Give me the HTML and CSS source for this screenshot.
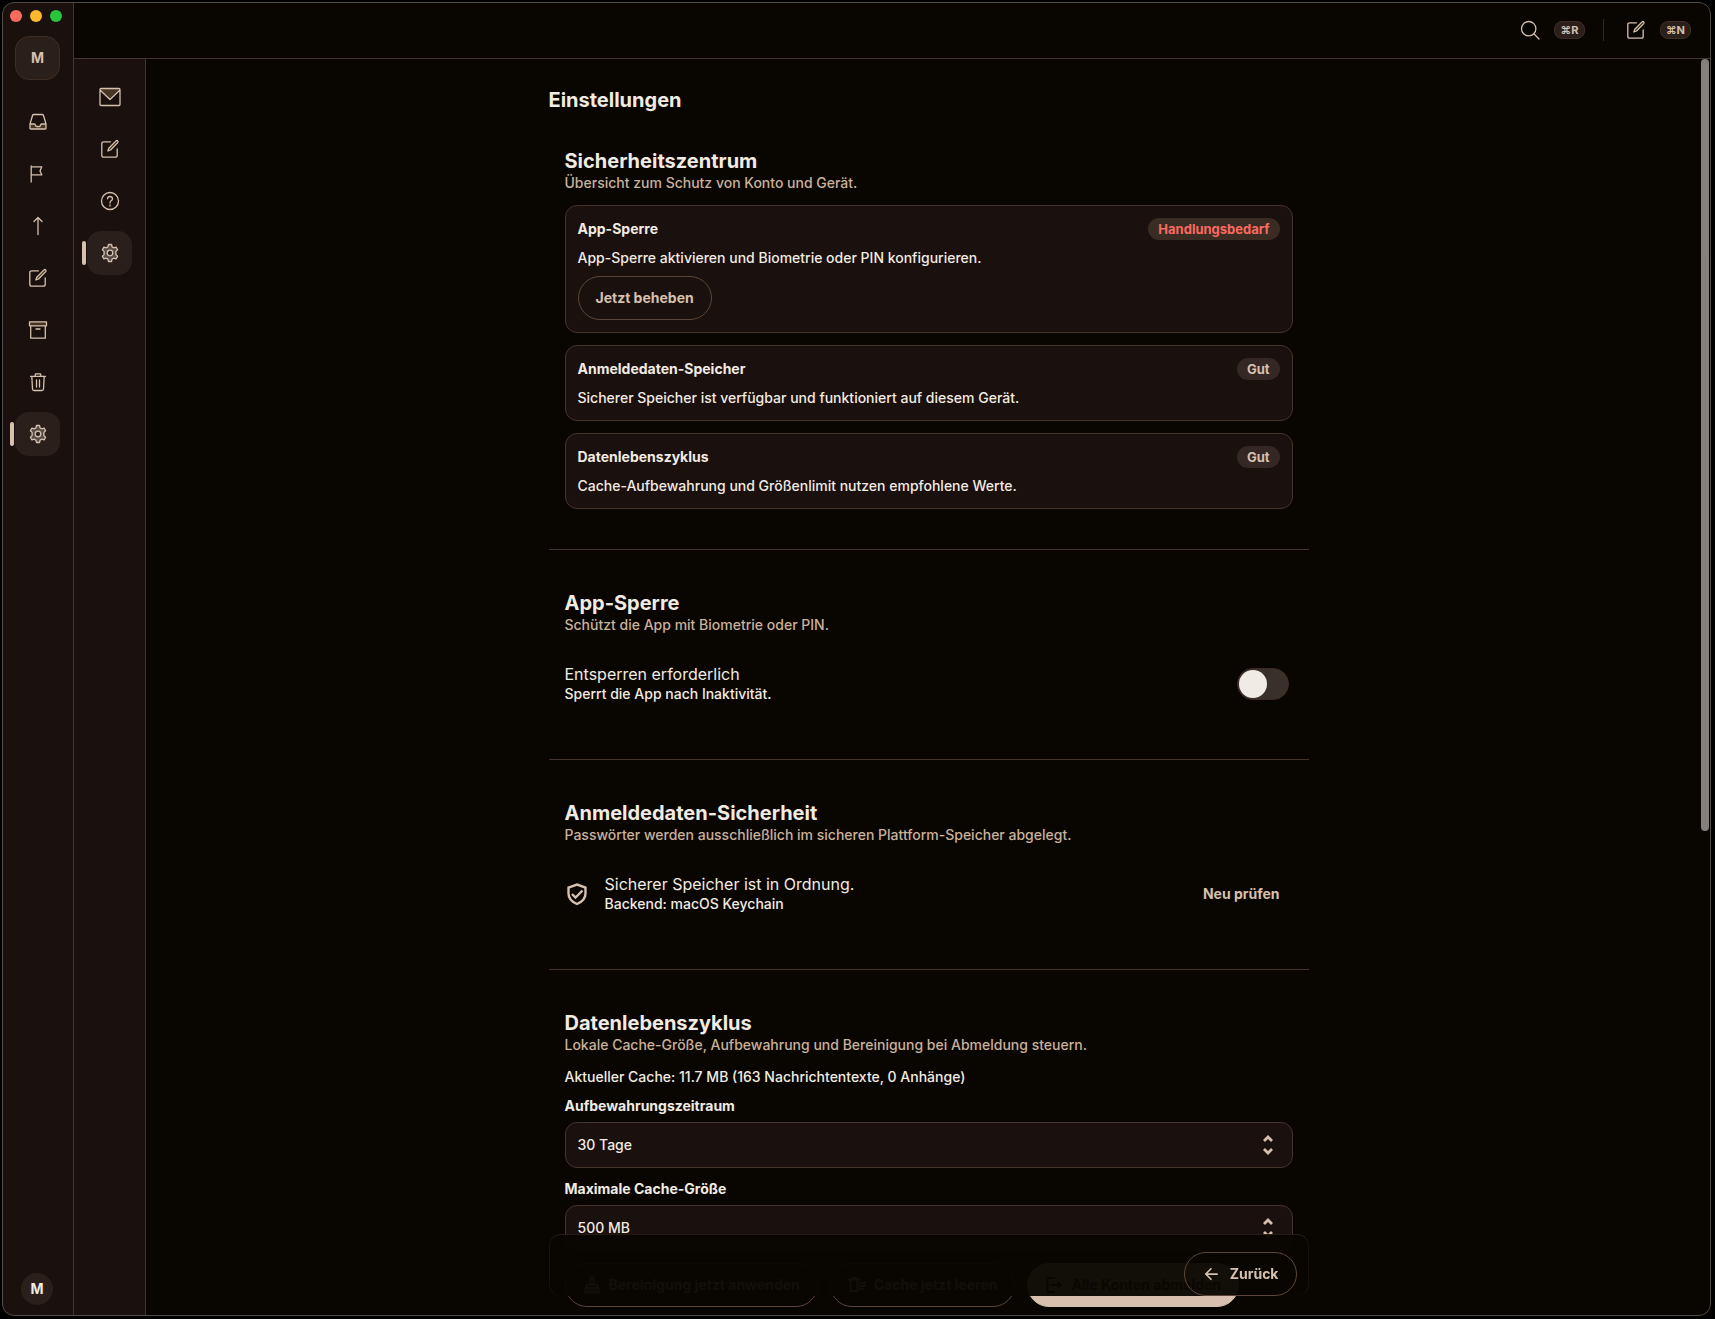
FILE: index.html
```html
<!DOCTYPE html>
<html lang="de">
<head>
<meta charset="utf-8">
<meta name="viewport" content="width=device-width, initial-scale=1">
<title>Einstellungen</title>
<link rel="stylesheet" href="styles.css">
</head>
<body>
<svg class="sprite" aria-hidden="true">
  <symbol id="i-inbox" viewBox="0 0 20 20"><path class="tint" d="M2 12h4.500l1.500 2.500h4l1.500-2.500H18v5H2z"/><path d="M2 12 4.500 3.500Q4.800 2.500 5.800 2.500h8.400q1 0 1.300 1L18 12v4.200q0 .8-.8.8H2.800q-.8 0-.8-.8zM2 12h4.300q.7 0 1 .8l.4.9q.3.800 1.100.8h2.400q.8 0 1.100-.8l.4-.9q.3-.8 1-.8H18"/></symbol>
  <symbol id="i-flag" viewBox="0 0 20 20"><path d="M3.200 18V2M3.200 2.800h10.600l-1.800 4.200 1.800 3.800H3.200"/></symbol>
  <symbol id="i-up" viewBox="0 0 20 20"><path d="M10 18.500V1.500M6 5.500l4-4 4 4"/></symbol>
  <symbol id="i-compose" viewBox="0 0 20 20"><path d="M10.500 2.800H3.800q-2 0-2 2v11.400q0 2 2 2h11.400q2 0 2-2V9.800"/><path class="tint" d="M16 1.900q.9-.8 1.700 0t0 1.700L10.600 11l-2.700 1 .9-2.800z"/><path d="M16 1.900q.9-.8 1.700 0t0 1.700L10.600 11l-2.700 1 .9-2.800z"/></symbol>
  <symbol id="i-archive" viewBox="0 0 20 20"><path class="tint" d="M1.500 1.800h17v4h-17z"/><path d="M1.500 1.800h17v4h-17zM2.700 5.800h14.600v12.400H2.700zM8 9h4"/></symbol>
  <symbol id="i-trash" viewBox="0 0 20 20"><path d="M2.500 4.300h15M3.800 4.300l.7 12.700q.1 1.500 1.500 1.500h8q1.400 0 1.500-1.500l.7-12.700M7 4.300l.5-2.500h5l.5 2.500M8.500 8v7M11.500 8v7"/></symbol>
  <symbol id="i-gear" viewBox="0 0 20 20"><path class="tint strong" fill-rule="evenodd" d="M8.500 1.500h3l.6 2.400 1.600.9 2.400-.7 1.500 2.600-1.700 1.700v3.200l1.700 1.700-1.500 2.600-2.400-.7-1.600.9-.6 2.400h-3l-.6-2.400-1.600-.9-2.400.7-1.500-2.600 1.700-1.700V8.400L2.400 6.700l1.500-2.600 2.400.7 1.600-.9zM10 7a3 3 0 1 0 0 6 3 3 0 0 0 0-6z"/><path d="M8.500 1.500h3l.6 2.400 1.600.9 2.400-.7 1.500 2.600-1.700 1.700v3.200l1.700 1.700-1.500 2.600-2.400-.7-1.600.9-.6 2.400h-3l-.6-2.400-1.600-.9-2.400.7-1.500-2.600 1.700-1.700V8.400L2.400 6.700l1.500-2.600 2.400.7 1.600-.9z"/><circle cx="10" cy="10" r="2.800"/></symbol>
  <symbol id="i-mail" viewBox="0 0 22 22"><path class="tint" d="M1 3h20L11 13z"/><path d="M2 2.500h18q1 0 1 1v15q0 1-1 1H2q-1 0-1-1v-15q0-1 1-1zM1 4l10 9.500L21 4"/></symbol>
  <symbol id="i-help" viewBox="0 0 20 20"><circle cx="10" cy="10" r="8.500"/><path d="M7.500 7.800Q7.700 5.500 10 5.500t2.500 2.200q0 1.200-1.400 2.100-1.100.7-1.100 2.200M10 14v1"/></symbol>
  <symbol id="i-search" viewBox="0 0 20 20"><circle cx="8.700" cy="8.700" r="7.200"/><path d="m14 14 5 5"/></symbol>
  <symbol id="i-shield" viewBox="0 0 24 24"><path d="M12 2.500 20.500 5.500v6Q20.500 18.500 12 22 3.500 18.500 3.500 11.500v-6zM7 12l3.500 3.500 7-7"/></symbol>
  <symbol id="i-updown" viewBox="0 0 12 20"><path d="m2 6 4-4 4 4M2 14l4 4 4-4"/></symbol>
  <symbol id="i-back" viewBox="0 0 16 16"><path d="M15 8H2.500M8 2 2 8l6 6"/></symbol>
  <symbol id="i-broom" viewBox="0 0 18 18"><path d="M7.500 8V1.500h3V8M3 12q0-3.500 3-3.500h6q3 0 3 3.500zM2.500 12.500 2 16.500h14l-.5-4M5.500 16v-2M9 16v-2M12.500 16v-2"/></symbol>
  <symbol id="i-sweep" viewBox="0 0 18 18"><path d="M1 3.500h10M2.500 4v11h7V4M4 2h4M12 7h5M12 10h5M12 13h3"/></symbol>
  <symbol id="i-logout" viewBox="0 0 18 18"><path d="M9 2H2.500v14H9M6 9h10M13 6l3 3-3 3"/></symbol>
</svg>

<div class="window">
  <aside class="rail rail-main">
    <div class="lights"><span class="light red"></span><span class="light amber"></span><span class="light green"></span></div>
    <button class="tile account" type="button">M</button>
    <nav class="rail-nav" aria-label="Ordner">
      <button class="tile" type="button" aria-label="Posteingang"><svg class="icon"><use href="#i-inbox"/></svg></button>
      <button class="tile" type="button" aria-label="Markiert"><svg class="icon"><use href="#i-flag"/></svg></button>
      <button class="tile" type="button" aria-label="Gesendet"><svg class="icon"><use href="#i-up"/></svg></button>
      <button class="tile" type="button" aria-label="Entwürfe"><svg class="icon"><use href="#i-compose"/></svg></button>
      <button class="tile" type="button" aria-label="Archiv"><svg class="icon"><use href="#i-archive"/></svg></button>
      <button class="tile" type="button" aria-label="Papierkorb"><svg class="icon"><use href="#i-trash"/></svg></button>
      <button class="tile active" type="button" aria-label="Einstellungen"><svg class="icon"><use href="#i-gear"/></svg></button>
    </nav>
    <button class="avatar" type="button">M</button>
  </aside>

  <div class="workspace">
    <header class="topbar">
      <button class="tool" type="button" aria-label="Suchen"><svg class="icon large"><use href="#i-search"/></svg><kbd>⌘R</kbd></button>
      <span class="tool-divider"></span>
      <button class="tool" type="button" aria-label="Verfassen"><svg class="icon large"><use href="#i-compose"/></svg><kbd>⌘N</kbd></button>
    </header>

    <div class="body">
      <nav class="rail rail-sub" aria-label="Bereiche">
        <button class="tile" type="button" aria-label="E-Mail"><svg class="icon wide"><use href="#i-mail"/></svg></button>
        <button class="tile" type="button" aria-label="Verfassen"><svg class="icon"><use href="#i-compose"/></svg></button>
        <button class="tile" type="button" aria-label="Hilfe"><svg class="icon"><use href="#i-help"/></svg></button>
        <button class="tile active" type="button" aria-label="Einstellungen"><svg class="icon"><use href="#i-gear"/></svg></button>
      </nav>

      <main class="scroller">
        <div class="column">
          <h1>Einstellungen</h1>

          <section class="section first">
            <h2>Sicherheitszentrum</h2>
            <p class="muted">Übersicht zum Schutz von Konto und Gerät.</p>
            <div class="cards">
              <article class="card">
                <div class="card-head"><h3>App-Sperre</h3><span class="badge alert">Handlungsbedarf</span></div>
                <p>App-Sperre aktivieren und Biometrie oder PIN konfigurieren.</p>
                <button class="pill" type="button">Jetzt beheben</button>
              </article>
              <article class="card">
                <div class="card-head"><h3>Anmeldedaten-Speicher</h3><span class="badge">Gut</span></div>
                <p>Sicherer Speicher ist verfügbar und funktioniert auf diesem Gerät.</p>
              </article>
              <article class="card">
                <div class="card-head"><h3>Datenlebenszyklus</h3><span class="badge">Gut</span></div>
                <p>Cache-Aufbewahrung und Größenlimit nutzen empfohlene Werte.</p>
              </article>
            </div>
          </section>

          <section class="section">
            <h2>App-Sperre</h2>
            <p class="muted">Schützt die App mit Biometrie oder PIN.</p>
            <div class="row">
              <div class="row-text">
                <label class="row-title" for="lock">Entsperren erforderlich</label>
                <p>Sperrt die App nach Inaktivität.</p>
              </div>
              <input class="switch" id="lock" type="checkbox" role="switch">
            </div>
          </section>

          <section class="section">
            <h2>Anmeldedaten-Sicherheit</h2>
            <p class="muted">Passwörter werden ausschließlich im sicheren Plattform-Speicher abgelegt.</p>
            <div class="row">
              <svg class="icon shield"><use href="#i-shield"/></svg>
              <div class="row-text">
                <p class="row-title">Sicherer Speicher ist in Ordnung.</p>
                <p>Backend: macOS Keychain</p>
              </div>
              <button class="text-button" type="button">Neu prüfen</button>
            </div>
          </section>

          <section class="section">
            <h2>Datenlebenszyklus</h2>
            <p class="muted">Lokale Cache-Größe, Aufbewahrung und Bereinigung bei Abmeldung steuern.</p>
            <p class="cache-size">Aktueller Cache: 11.7 MB (163 Nachrichtentexte, 0 Anhänge)</p>
            <div class="fields">
              <div class="field">
                <label for="retention">Aufbewahrungszeitraum</label>
                <div class="select"><select id="retention"><option>30 Tage</option></select><svg class="icon chevrons"><use href="#i-updown"/></svg></div>
              </div>
              <div class="field">
                <label for="limit">Maximale Cache-Größe</label>
                <div class="select"><select id="limit"><option>500 MB</option></select><svg class="icon chevrons"><use href="#i-updown"/></svg></div>
              </div>
              <div class="actions">
                <button class="pill" type="button"><svg class="icon small"><use href="#i-broom"/></svg>Bereinigung jetzt anwenden</button>
                <button class="pill" type="button"><svg class="icon small"><use href="#i-sweep"/></svg>Cache jetzt leeren</button>
                <button class="pill filled" type="button"><svg class="icon small"><use href="#i-logout"/></svg>Alle Konten abmelden</button>
              </div>
            </div>
          </section>

          <footer class="footer">
            <button class="pill" type="button"><svg class="icon back"><use href="#i-back"/></svg>Zurück</button>
          </footer>
        </div>
      </main>
      <div class="scroll-thumb"></div>
    </div>
  </div>
</div>
</body>
</html>
```

FILE: styles.css
```css
:root {
  --bg: #090601;
  --surface: #1a100d;
  --raised: #2b1f1b;
  --line: #45342a;
  --outline: #5c4637;
  --text: #f2ebe3;
  --accent: #d7c0ad;
  --muted: #c9b19c;
}

* { box-sizing: border-box; }

body {
  margin: 0;
  height: 100vh;
  padding: 2px 4px 3px 2px;
  background: #000;
  color: var(--text);
  font: 500 14px/20px Inter, "Liberation Sans", sans-serif;
}

h1, h2, h3, p { margin: 0; }

button {
  padding: 0;
  border: 0;
  background: none;
  color: var(--accent);
  font: inherit;
  cursor: pointer;
}

.sprite { display: none; }

.icon {
  flex: none;
  width: 20px;
  height: 20px;
  fill: none;
  stroke: currentColor;
  stroke-width: 1.3;
  stroke-linecap: round;
  stroke-linejoin: round;
}
.tint { fill: #7d6340; fill-opacity: .45; stroke: none; }
.tint.strong { fill: #8d8580; }
.icon.wide { width: 22px; height: 22px; }
.icon.small { width: 18px; height: 18px; stroke-width: 2; }
.icon.back { width: 14px; height: 14px; margin: 0 4px 0 2px; stroke-width: 2; }
.icon.shield { width: 24px; height: 24px; color: var(--accent); stroke-width: 2.4; stroke-linecap: butt; stroke-linejoin: miter; }

.window {
  position: relative;
  display: flex;
  height: 100%;
  overflow: hidden;
  border-radius: 12px;
  background: var(--bg);
}
/* Window frame, drawn over the rails and the header */
.window::after {
  content: "";
  position: absolute;
  inset: 0;
  border: 1px solid #514c48;
  border-radius: 12px;
  pointer-events: none;
}

.rail {
  flex: none;
  display: flex;
  flex-direction: column;
  width: 72px;
  padding: 16px 13px;
  border-right: 1px solid var(--line);
  background: var(--surface);
}
.rail-main { padding: 8px 0 11px 13px; }
.rail-nav { display: flex; flex-direction: column; gap: 8px; }
.rail-sub { gap: 8px; }

.lights { display: flex; gap: 8px; margin: 0 0 14px -5px; }
.light { width: 12px; height: 12px; border-radius: 50%; }
.red { background: #fb6a60; }
.amber { background: #fdb82c; }
.green { background: #28c43e; }

.tile {
  position: relative;
  display: grid;
  place-items: center;
  width: 45px;
  height: 44px;
  border-radius: 14px;
}
.account {
  margin-bottom: 20px;
  border: 1px solid #3e2d23;
  background: var(--raised);
  font-weight: 700;
}
.active { background: var(--raised); }
.active::before {
  content: "";
  position: absolute;
  left: -5px;
  width: 4px;
  height: 24px;
  border-radius: 2px;
  background: var(--accent);
}
.avatar {
  width: 32px;
  height: 32px;
  margin: auto 0 0 6px;
  border-radius: 50%;
  background: var(--raised);
  color: var(--text);
  font-weight: 700;
}

.workspace { flex: 1; min-width: 0; display: flex; flex-direction: column; }
.topbar {
  flex: none;
  display: flex;
  align-items: center;
  justify-content: flex-end;
  gap: 18px;
  height: 57px;
  padding-right: 20px;
  border-bottom: 1px solid var(--line);
}
.tool { display: flex; align-items: center; gap: 14px; }
.tool-divider { width: 1px; height: 22px; margin-right: 4px; background: #33271f; }
kbd {
  width: 31px;
  border: 1px solid #3e2d23;
  border-radius: 8px;
  background: var(--raised);
  font: 700 11px/16px Inter, "DejaVu Sans", sans-serif;
  text-align: center;
}

.body { position: relative; flex: 1; min-height: 0; display: flex; }
.scroller {
  flex: 1;
  min-width: 0;
  overflow-y: auto;
  scrollbar-width: none;
}
.scroll-thumb {
  position: absolute;
  top: 0;
  right: 2px;
  width: 8px;
  height: 61.4%;
  border-radius: 4px;
  background: #85807a;
}

.column { max-width: 760px; margin: 0 auto; padding-top: 29px; }
h1, h2 { font-size: 20px; line-height: 24px; font-weight: 700; }
h3 { font-size: 14px; line-height: 20px; font-weight: 700; }
.muted { color: var(--muted); }

.section { padding: 41px 16px 40px; }
.section.first { padding-top: 37px; }
.section + .section { border-top: 1px solid var(--line); }

.cards { display: grid; gap: 12px; margin-top: 12px; }
.card {
  display: flex;
  flex-direction: column;
  align-items: flex-start;
  gap: 8px;
  padding: 12px;
  border: 1px solid var(--line);
  border-radius: 12px;
  background: var(--surface);
}
.card-head { display: flex; justify-content: space-between; align-items: center; width: 100%; }
.badge {
  padding: 0 10px;
  border-radius: 11px;
  background: #352723;
  color: var(--accent);
  font-size: 13px;
  line-height: 22px;
  font-weight: 700;
}
.alert { background: #3a2c22; color: #fb6a62; }

.pill {
  display: inline-flex;
  align-items: center;
  gap: 8px;
  height: 44px;
  padding: 0 17px;
  border: 1px solid var(--outline);
  border-radius: 22px;
  font-weight: 700;
  white-space: nowrap;
}
.filled { border-color: var(--accent); background: var(--accent); color: #2b1a10; }

.row { display: flex; align-items: center; gap: 16px; margin-top: 13px; padding: 16px 0 15px; }
.row-text { flex: 1; }
.row-title { display: block; font-size: 16px; font-weight: 400; }
.switch {
  appearance: none;
  display: flex;
  align-items: center;
  width: 52px;
  height: 32px;
  margin: 0 4px 0 0;
  padding: 1px;
  border: 1px solid #3e2a22;
  border-radius: 16px;
  background: #3a302b;
}
.switch::before { content: ""; width: 28px; height: 28px; border-radius: 50%; background: #f0ebe4; }
.switch:checked::before { margin-left: auto; }
.text-button { padding: 8px 13px; font-weight: 700; }

.cache-size { margin-top: 12px; }
.fields { display: grid; gap: 12px; margin-top: 10px; }
.field { display: grid; gap: 7px; }
.field label { line-height: 18px; font-weight: 700; }
.select { position: relative; display: grid; }
select {
  appearance: none;
  height: 46px;
  padding: 0 12px;
  border: 1px solid var(--line);
  border-radius: 12px;
  background: var(--surface);
  color: var(--text);
  font: inherit;
}
.icon.chevrons {
  position: absolute;
  top: 13px;
  right: 19px;
  width: 12px;
  height: 20px;
  color: var(--accent);
  stroke-width: 2.8;
  stroke-linecap: butt;
  stroke-linejoin: miter;
  pointer-events: none;
}
.actions { display: flex; flex-wrap: wrap; gap: 12px; }

.footer {
  position: sticky;
  bottom: 20px;
  display: flex;
  justify-content: flex-end;
  padding: 17px 11px 0;
  border: 1px solid rgba(92, 70, 55, .2);
  border-top-color: rgba(92, 70, 55, .35);
  border-bottom: 0;
  border-radius: 12px;
  background: rgba(9, 6, 1, .96);
}
```
